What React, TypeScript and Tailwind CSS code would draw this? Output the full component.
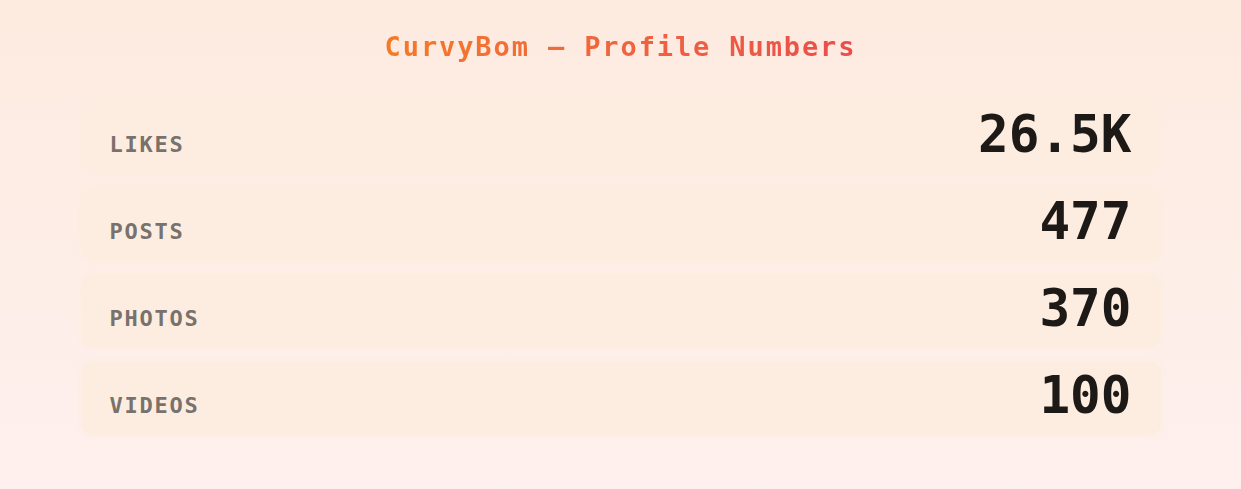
const stats = [
  { label: "LIKES", value: "26.5K" },
  { label: "POSTS", value: "477" },
  { label: "PHOTOS", value: "370" },
  { label: "VIDEOS", value: "100" },
]

export default function App() {
  return (
    <div
      className="min-h-screen w-full bg-gradient-to-b from-[#fdebe0] to-[#fef0ee] pt-[33px]"
      style={{ fontFamily: '"DejaVu Sans Mono", "Liberation Mono", monospace' }}
    >
      <h1 className="text-center text-[27px] font-bold leading-none tracking-[0.07em]">
        <span className="bg-gradient-to-r from-[#f47a26] to-[#ea4c4c] bg-clip-text text-transparent">
          CurvyBom — Profile Numbers
        </span>
      </h1>

      {/* Stat rows */}
      <div className="mx-auto mt-[40px] flex w-[1080px] flex-col gap-[13px]">
        {stats.map((s) => (
          <div
            key={s.label}
            className="flex items-baseline justify-between rounded-xl bg-[#fdede0] px-[29px] pt-[9px] pb-[14px] shadow-[0_0_6px_rgba(253,237,224,0.9)]"
          >
            <span className="text-[22px] font-bold leading-none tracking-[0.08em] text-[#78716c]">
              {s.label}
            </span>
            <span className="text-[51px] font-bold leading-none text-[#1c1917]">{s.value}</span>
          </div>
        ))}
      </div>
    </div>
  )
}
